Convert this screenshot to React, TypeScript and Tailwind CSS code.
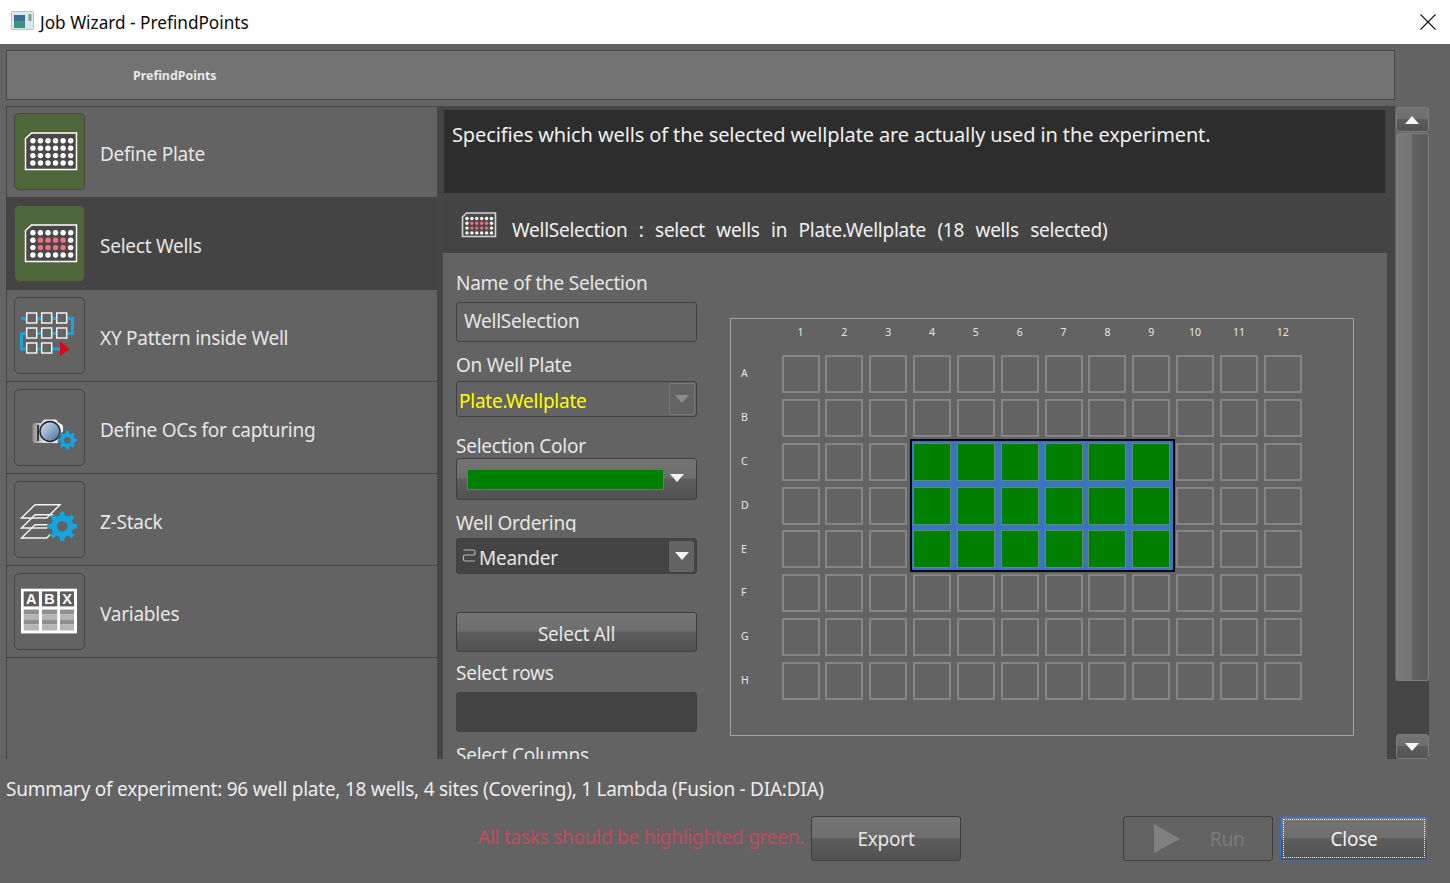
import React from "react";

const FONT = "font-['Noto_Sans','Open_Sans',sans-serif] tracking-[-0.25px]";
const BTN_BG = "bg-[linear-gradient(#747474_0%,#6e6e6e_48%,#5d5d5d_50%,#525252_100%)] border rounded-[3px]";
const BTN = `${BTN_BG} border-[#3e3e3e]`;
const SCROLL_BTN = `${BTN_BG} border-[#7d7d7d]`;

function gearPoints(cx: number, cy: number, r: number, teeth = 8) {
  const pts: string[] = [];
  const inner = r * 0.74;
  const step = (Math.PI * 2) / teeth;
  for (let i = 0; i < teeth; i++) {
    const a = i * step - Math.PI / 2;
    const w = step * 0.2;
    const add = (rad: number, ang: number) =>
      pts.push(`${(cx + rad * Math.cos(ang)).toFixed(2)},${(cy + rad * Math.sin(ang)).toFixed(2)}`);
    add(inner, a - w * 1.5);
    add(r, a - w * 0.8);
    add(r, a + w * 0.8);
    add(inner, a + w * 1.5);
  }
  return pts.join(" ");
}

function Gear({ cx, cy, r, hole }: { cx: number; cy: number; r: number; hole: string }) {
  return (
    <g>
      <polygon points={gearPoints(cx, cy, r)} fill="#12a5e0" />
      <circle cx={cx} cy={cy} r={r * 0.36} fill={hole} />
    </g>
  );
}

function PlateIcon({ pink = false }: { pink?: boolean }) {
  const dots = [];
  for (let row = 0; row < 4; row++) {
    for (let col = 0; col < 6; col++) {
      const hot = pink && row > 0 && row < 3 && col > 0 && col < 5;
      dots.push(
        <circle
          key={`${row}-${col}`}
          cx={18.9 + col * 7.55}
          cy={27.7 + row * 7.45}
          r={2.7}
          fill={hot ? "#f4707f" : "#ffffff"}
        />,
      );
    }
  }
  return (
    <svg width="71" height="77" viewBox="0 0 71 77" className="block -m-[1px]">
      <path d="M11.5 25.5 V 56.5 H 62.5 V 20 H 17.5 Z" fill="#484848" stroke="#ffffff" strokeWidth="1.5" />
      {dots}
    </svg>
  );
}

function SmallPlateIcon() {
  const dots = [];
  for (let row = 0; row < 4; row++) {
    for (let col = 0; col < 6; col++) {
      const hot = row > 0 && row < 3 && col > 0 && col < 5;
      dots.push(
        <circle key={`${row}-${col}`} cx={6 + col * 4.9} cy={7.5 + row * 4.8} r="1.7" fill={hot ? "#f06a7a" : "#ffffff"} />,
      );
    }
  }
  return (
    <svg width="36" height="28" viewBox="0 0 36 28" className="block">
      <path d="M1.5 6 V 25.5 H 34.5 V 2 H 5.5 Z" fill="#4a4a4a" stroke="#d4d4d4" strokeWidth="1.6" />
      {dots}
    </svg>
  );
}

function PatternIcon() {
  const xs = [12.7, 27.7, 42.7];
  const ys = [16, 31, 46];
  return (
    <svg width="71" height="77" viewBox="0 0 71 77" className="block -m-[1px]">
      <path d="M7 21.5 H 58.5 V 36.5 H 7.5 V 52 H 47" fill="none" stroke="#12a5e0" strokeWidth="3" />
      {ys.map((y, r) =>
        xs.map((x, c) =>
          r === 2 && c === 2 ? null : (
            <rect key={`${r}${c}`} x={x} y={y} width="10" height="10" fill="#636363" stroke="#f2f2f2" strokeWidth="1.5" />
          ),
        ),
      )}
      <polygon points="46,44.5 55.5,52 46,59" fill="#e3001b" />
    </svg>
  );
}

function CameraIcon() {
  return (
    <svg width="71" height="77" viewBox="0 0 71 77" className="block -m-[1px]">
      <defs>
        <linearGradient id="lens" x1="0" y1="0" x2="1" y2="1">
          <stop offset="0" stopColor="#dbe7f4" />
          <stop offset="1" stopColor="#3f6c9c" />
        </linearGradient>
        <linearGradient id="body" x1="0" y1="0" x2="1" y2="0">
          <stop offset="0" stopColor="#8d8d8d" />
          <stop offset="0.4" stopColor="#e6e6e6" />
          <stop offset="1" stopColor="#f4f4f4" />
        </linearGradient>
      </defs>
      <path d="M18.5 37 Q18.5 34 22 34 H27 L30 30.5 H42 L45 34 Q49 35 49 38 V 54 H 21 Q18.5 54 18.5 51 Z" fill="url(#body)" />
      <rect x="23" y="36" width="2" height="16" fill="#3a3a3a" />
      <circle cx="36" cy="42.5" r="10" fill="url(#lens)" stroke="#222222" strokeWidth="1.4" />
      <circle cx="53.5" cy="51.3" r="10" fill="#636363" />
      <Gear cx={53.5} cy={51.3} r={9.5} hole="#636363" />
    </svg>
  );
}

function StackIcon() {
  return (
    <svg width="71" height="77" viewBox="0 0 71 77" className="block -m-[1px]">
      {[0, 10, 20].map((d) => (
        <polygon
          key={d}
          points={`7.5,${37 + d} 21,${23.7 + d} 46,${23.7 + d} 32.7,${37 + d}`}
          fill="none"
          stroke="#f2f2f2"
          strokeWidth="1.4"
        />
      ))}
      <circle cx="48.3" cy="45.3" r="15" fill="#636363" />
      <Gear cx={48.3} cy={45.3} r={15} hole="#636363" />
    </svg>
  );
}

function TableIcon() {
  const xs = [9.7, 28, 46];
  return (
    <svg width="71" height="77" viewBox="0 0 71 77" className="block -m-[1px]">
      <rect x="7" y="15.7" width="56" height="44.7" fill="#ffffff" />
      {["A", "B", "X"].map((l, i) => (
        <g key={l}>
          <rect x={xs[i]} y={18.4} width={i === 2 ? 14 : 15.2} height={15} fill="#5c5c5c" />
          <text x={xs[i] + (i === 2 ? 7 : 7.6)} y={31} textAnchor="middle" fontSize="14.5" fontWeight="700" letterSpacing="0" fill="#ffffff" fontFamily="Liberation Sans">
            {l}
          </text>
          <rect x={xs[i]} y={36.5} width={i === 2 ? 14 : 15.2} height={5} fill="#8f8f8f" />
          <rect x={xs[i]} y={41.5} width={i === 2 ? 14 : 15.2} height={5} fill="#b5b5b5" />
          <rect x={xs[i]} y={46.5} width={i === 2 ? 14 : 15.2} height={5} fill="#8f8f8f" />
          <rect x={xs[i]} y={51.5} width={i === 2 ? 14 : 15.2} height={6} fill="#b5b5b5" />
        </g>
      ))}
    </svg>
  );
}

const NAV = [
  { label: "Define Plate", icon: <PlateIcon />, done: true },
  { label: "Select Wells", icon: <PlateIcon pink />, done: true, active: true },
  { label: "XY Pattern inside Well", icon: <PatternIcon /> },
  { label: "Define OCs for capturing", icon: <CameraIcon /> },
  { label: "Z-Stack", icon: <StackIcon /> },
  { label: "Variables", icon: <TableIcon /> },
];

function NavRow({ label, icon, done, active }: { label: string; icon: React.ReactNode; done?: boolean; active?: boolean }) {
  return (
    <div className={`h-[92px] first:h-[91px] shrink-0 flex items-start border-b border-[#454545] pl-[7px] pt-[7px] first:pt-[6px] ${active ? "bg-[#444444]" : "bg-[#636363]"}`}>
      <div className={`w-[71px] h-[77px] shrink-0 rounded-[5px] border border-[#454545] overflow-hidden ${done ? "bg-[#4e663a]" : ""}`}>{icon}</div>
      <span className="ml-[15px] mt-[28px] text-[19px] leading-[26px] text-[#e6e6e6]">{label}</span>
    </div>
  );
}

function Field({ children, className }: { children: React.ReactNode; className: string }) {
  return <div className={`shrink-0 text-[19px] leading-[26px] text-[#e6e6e6] whitespace-nowrap overflow-hidden ${className}`}>{children}</div>;
}

function Arrow({ dir = "down", color = "#f4f4f4" }: { dir?: "up" | "down"; color?: string }) {
  return (
    <svg width="14" height="8" viewBox="0 0 14 8" className="block">
      <polygon points={dir === "down" ? "0,0 14,0 7,8" : "0,8 14,8 7,0"} fill={color} />
    </svg>
  );
}

const ROWS = ["A", "B", "C", "D", "E", "F", "G", "H"];
const COLS = ["1", "2", "3", "4", "5", "6", "7", "8", "9", "10", "11", "12"];

function WellPlate() {
  return (
    <div className="relative w-[624px] h-[418px] mt-[65px] ml-[33px] shrink-0 border border-[#a3a3a3] pl-[50.5px] pt-[36px]">
      <div className="grid grid-cols-[repeat(12,38px)] gap-[5.85px] relative">
        <div className="absolute left-[128px] top-[84px] w-[265px] h-[133px] border-2 border-[#080808] bg-[#3b75c2]" />
        {ROWS.map((r, ri) =>
          COLS.map((c, ci) => {
            const on = ri >= 2 && ri <= 4 && ci >= 3 && ci <= 8;
            return <div key={r + c} className={`relative h-[38px] ${on ? "border bg-[#008000] border-[#5f8f6a]" : "border-2 border-[#858585]"}`} />;
          }),
        )}
      </div>
      <div className="absolute left-[50.5px] top-[5px] grid grid-cols-[repeat(12,38px)] gap-x-[5.85px] text-[10.5px] leading-[16px] text-[#e6e6e6] text-center tracking-normal">
        {COLS.map((c) => (
          <span key={c}>{c}</span>
        ))}
      </div>
      <div className="absolute left-[10px] top-[36px] grid grid-rows-[repeat(8,38px)] gap-y-[5.85px] text-[10.5px] text-[#e6e6e6]">
        {ROWS.map((r) => (
          <span key={r} className="flex items-center">
            {r}
          </span>
        ))}
      </div>
    </div>
  );
}

export default function App() {
  return (
    <div className={`w-[1450px] h-[883px] bg-[#636363] flex flex-col overflow-hidden ${FONT}`}>
      {/* title bar */}
      <div className="h-[44px] shrink-0 bg-white flex items-center pl-[11px]">
        <svg width="24" height="20" viewBox="0 0 24 20" className="block mt-[-3px]">
          <rect x="0.5" y="0.5" width="22" height="18" rx="1" fill="#dfe5e9" stroke="#b9c2c9" />
          <rect x="3" y="4" width="11" height="13" fill="#3f8f86" />
          <rect x="3" y="4" width="11" height="6" fill="#3c6f8f" />
          <rect x="17.5" y="3" width="3" height="7" fill="#7aa78f" />
        </svg>
        <span className="ml-[5px] mt-[1px] text-[17.2px] leading-[24px] tracking-normal text-[#0a0a0a]">Job Wizard - PrefindPoints</span>
        <svg width="16" height="16" viewBox="0 0 16 16" className="block ml-auto mr-[14px]">
          <path d="M0.5 0.5 L15.5 15.5 M15.5 0.5 L0.5 15.5" stroke="#111111" strokeWidth="1.1" />
        </svg>
      </div>

      {/* step header */}
      <div className="mt-[6px] ml-[6px] w-[1389px] h-[50px] shrink-0 border border-[#454545] bg-[#737373] flex items-center pl-[126px] pt-[3px]">
        <span className="text-[12.4px] font-bold tracking-normal text-[#e8e8e8]">PrefindPoints</span>
      </div>

      {/* main */}
      <div className="mt-[6px] ml-[6px] h-[653px] shrink-0 flex overflow-hidden">
        <div className="w-[431px] shrink-0 flex flex-col border-l border-t border-[#454545]">
          {NAV.map((n) => (
            <NavRow key={n.label} {...n} />
          ))}
        </div>

        <div className="w-[958px] shrink-0 flex flex-col">
          <div className="h-[92px] shrink-0 bg-[#454545] pl-[7px] pr-[10px] pt-[4px] pb-[5px]">
            <div className="h-full bg-[#2d2d2d] pl-[8px] pt-[11px] text-[20px] leading-[28px] tracking-[-0.12px] text-[#f0f0f0] whitespace-nowrap">
              Specifies which wells of the selected wellplate are actually used in the experiment.
            </div>
          </div>
          <div className="flex-1 flex border-l-[6px] border-[#454545] min-h-0">
            <div className="flex-1 flex flex-col min-w-0">
              <div className="h-[55px] shrink-0 bg-[#444444] flex items-start pl-[18px] pt-[13px]">
                <SmallPlateIcon />
                <span className="ml-[15px] mt-[6px] text-[19px] leading-[26px] [word-spacing:1px] text-[#f0f0f0] whitespace-pre">
                  WellSelection  :  select  wells  in  Plate.Wellplate  (18  wells  selected)
                </span>
              </div>
              <div className="flex-1 bg-[#636363] flex overflow-hidden pl-[13px]">
                <div className="w-[241px] shrink-0 flex flex-col">
                  <Field className="mt-[17px] h-[32px]">Name of the Selection</Field>
                  <div className="h-[40px] shrink-0 border border-[#404040] rounded-[3px] pl-[7px] pb-[2px] flex items-center text-[19px] text-[#e6e6e6]">
                    WellSelection
                  </div>
                  <Field className="h-[39px] pt-[10px]">On Well Plate</Field>
                  <div className="h-[36px] shrink-0 border border-[#404040] rounded-[3px] pl-[2px] pr-[1px] flex items-center text-[19px] text-[#ffff00]">
                    <span className="mt-[4px]">Plate.Wellplate</span>
                    <div className="ml-auto w-[26px] h-[32px] border border-[#7a7a7a] rounded-[2px] flex items-center justify-center">
                      <Arrow color="#8c8c8c" />
                    </div>
                  </div>
                  <Field className="h-[41px] pt-[16px]">Selection Color</Field>
                  <div className={`h-[42px] shrink-0 ${BTN} flex items-center pl-[10px] pr-[12px]`}>
                    <div className="w-[198px] h-[21px] bg-[#008000] border border-[#5f7f5f]" />
                    <div className="ml-[6px] mt-[-2px]">
                      <Arrow />
                    </div>
                  </div>
                  <Field className="h-[32px] pt-[10px]">Well Ordering</Field>
                  <div className="h-[36px] mt-[6px] shrink-0 bg-[#444444] border border-[#404040] rounded-[3px] pl-[5px] pr-[2px] flex items-center text-[19px] text-[#e6e6e6]">
                    <svg width="15" height="17" viewBox="0 0 15 17" className="block shrink-0 mt-[-2px]">
                      <path d="M1.5 3 H 11.5 Q 13 3 13 4.5 V 6.5 Q 13 8 11.5 8 H 3 Q 1.5 8 1.5 9.5 V 12.5 Q 1.5 14 3 14 H 13" fill="none" stroke="#b8b8b8" strokeWidth="1.2" />
                    </svg>
                    <span className="ml-[2px] mt-[4px]">Meander</span>
                    <div className="ml-auto w-[25px] h-[31px] bg-[#636363] rounded-[2px] flex items-center justify-center">
                      <Arrow />
                    </div>
                  </div>
                  <button className={`h-[40px] mt-[38px] shrink-0 pt-[4px] ${BTN} text-[19px] text-[#e6e6e6]`}>Select All</button>
                  <Field className="h-[40px] pt-[8px]">Select rows</Field>
                  <div className="h-[40px] shrink-0 bg-[#444444] border border-[#404040] rounded-[3px]" />
                  <Field className="h-[40px] pt-[10px]">Select Columns</Field>
                </div>
                <WellPlate />
              </div>
            </div>
            <div className="w-[8px] shrink-0 bg-[#454545]" />
          </div>
        </div>

        {/* scrollbar */}
        <div className="w-[34px] shrink-0 flex flex-col items-start pl-[1px] bg-[linear-gradient(#636363_0%,#636363_88%,#454545_88%,#454545_100%)]">
          <div className={`w-[32.5px] h-[25px] mt-[1px] shrink-0 ${SCROLL_BTN} flex items-center justify-center`}>
            <Arrow dir="up" />
          </div>
          <div className="w-[32.5px] mt-[1px] h-[548px] shrink-0 rounded-[3px] border border-[#7d7d7d] bg-[linear-gradient(90deg,#7a7a7a_0%,#747474_48%,#626262_50%,#5a5a5a_100%)]" />
          <div className={`w-[32.5px] h-[25px] mt-auto shrink-0 ${SCROLL_BTN} flex items-center justify-center`}>
            <Arrow />
          </div>
        </div>
      </div>

      {/* footer */}
      <div className="pl-[6px] pt-[17px] h-[26px] box-content text-[19px] leading-[26px] text-[#ededed] whitespace-nowrap">
        Summary of experiment: 96 well plate, 18 wells, 4 sites (Covering), 1 Lambda (Fusion - DIA:DIA)
      </div>
      <div className="mt-[14px] flex items-start pl-[478px]">
        <span className="w-[333px] shrink-0 mt-[8px] text-[19px] leading-[26px] text-[#c04c5e] whitespace-nowrap">All tasks should be highlighted green.</span>
        <button className={`w-[150px] h-[45px] shrink-0 pt-[2px] ${BTN} text-[19px] text-[#e6e6e6]`}>Export</button>
        <button className="ml-[162px] w-[150px] h-[45px] shrink-0 border border-[#3e3e3e] rounded-[3px] bg-[#636363] flex items-center text-[19px] text-[#7b7b7b]">
          <svg width="28" height="30" viewBox="0 0 28 30" className="block ml-[29px]">
            <polygon points="1,0 27,15 1,29" fill="#808080" />
          </svg>
          <span className="ml-[29px] mt-[2px]">Run</span>
        </button>
        <button className={`ml-[7px] w-[148px] h-[45px] shrink-0 p-[2px] ${BTN_BG} border-[#2f6fc4] text-[19px] text-[#f0f0f0]`}>
          <span className="flex items-center justify-center h-full border border-dotted border-white pt-[2px]">Close</span>
        </button>
      </div>
    </div>
  );
}
